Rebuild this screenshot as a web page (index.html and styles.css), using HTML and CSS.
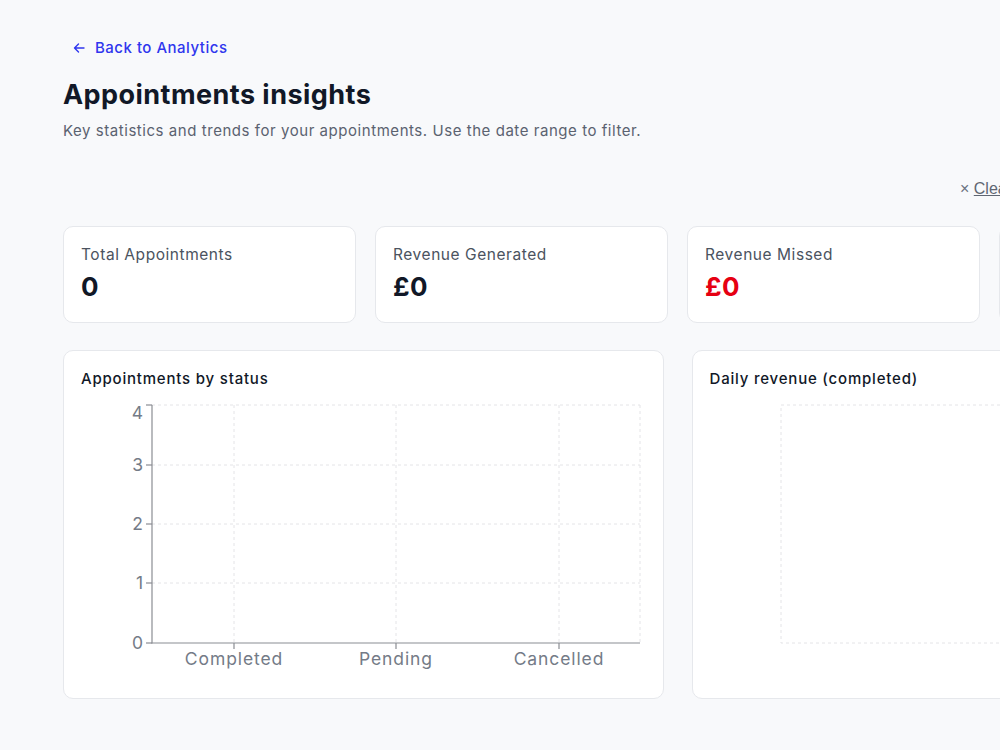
FILE: index.html
```html
<!DOCTYPE html>
<html lang="en">
<head>
    <meta charset="UTF-8">
    <meta name="viewport" content="width=device-width, initial-scale=1.0">
    <title>Appointments insights</title>

    <link rel="stylesheet" href="styles.css">
</head>
<body>
    <div class="page">
        <a class="back-link" href="#">
            <svg width="12" height="12" viewBox="0 0 12 12" fill="none" stroke="currentColor" stroke-width="1.4" stroke-linecap="round" stroke-linejoin="round">
                <path d="M11 6H1.5M5.5 2L1.5 6l4 4"/>
            </svg>
            <span>Back to Analytics</span>
        </a>

        <h1>Appointments insights</h1>
        <p class="tagline">Key statistics and trends for your appointments. Use the date range to filter.</p>

        <div class="toolbar">
            <a class="clear-link" href="#"><span class="times">&times;</span> <u>Clear</u></a>
            <div class="date-range">
                <span>From</span>
                <span>To</span>
            </div>
        </div>

        <section class="stats">
            <div class="stat-card">
                <p class="stat-label">Total Appointments</p>
                <p class="stat-value">0</p>
            </div>
            <div class="stat-card">
                <p class="stat-label">Revenue Generated</p>
                <p class="stat-value">&pound;0</p>
            </div>
            <div class="stat-card">
                <p class="stat-label">Revenue Missed</p>
                <p class="stat-value missed">&pound;0</p>
            </div>
            <div class="stat-card">
                <p class="stat-label">Average Value</p>
                <p class="stat-value">&pound;0</p>
            </div>
        </section>

        <section class="charts">
            <div class="chart-card">
                <h2>Appointments by status</h2>
                <svg class="chart" width="564" height="294" viewBox="0 0 564 294">
                    <!-- grid -->
                    <g class="grid">
                        <line x1="71" y1="16" x2="559" y2="16"/>
                        <line x1="71" y1="76" x2="559" y2="76"/>
                        <line x1="71" y1="135" x2="559" y2="135"/>
                        <line x1="71" y1="194" x2="559" y2="194"/>
                        <line x1="153" y1="16" x2="153" y2="254"/>
                        <line x1="315" y1="16" x2="315" y2="254"/>
                        <line x1="478" y1="16" x2="478" y2="254"/>
                        <line x1="559" y1="16" x2="559" y2="254"/>
                    </g>
                    <!-- axes -->
                    <g class="axis">
                        <line x1="71" y1="16" x2="71" y2="254.5"/>
                        <line x1="70.5" y1="254" x2="559" y2="254"/>
                        <line x1="65" y1="16" x2="71" y2="16"/>
                        <line x1="65" y1="76" x2="71" y2="76"/>
                        <line x1="65" y1="135" x2="71" y2="135"/>
                        <line x1="65" y1="194" x2="71" y2="194"/>
                        <line x1="65" y1="254" x2="71" y2="254"/>
                        <line x1="153" y1="254" x2="153" y2="260"/>
                        <line x1="315" y1="254" x2="315" y2="260"/>
                        <line x1="478" y1="254" x2="478" y2="260"/>
                    </g>
                    <g class="tick-text y-ticks">
                        <text x="62" y="30">4</text>
                        <text x="62" y="82">3</text>
                        <text x="62" y="141">2</text>
                        <text x="62" y="200">1</text>
                        <text x="62" y="260">0</text>
                    </g>
                    <g class="tick-text x-ticks">
                        <text x="153" y="276">Completed</text>
                        <text x="315" y="276">Pending</text>
                        <text x="478" y="276">Cancelled</text>
                    </g>
                </svg>
            </div>
            <div class="chart-card">
                <h2>Daily revenue (completed)</h2>
                <svg class="chart" width="564" height="294" viewBox="0 0 564 294">
                    <rect class="grid" x="71" y="16" width="488" height="238" fill="none"/>
                </svg>
            </div>
        </section>
    </div>
</body>
</html>
```

FILE: styles.css
```css
/* VARIABLES */

:root {
    --page-bg: #f8f9fb;
    --border: #e6e8ec;
    --text-dark: #111827;
    --text-muted: #5b6270;
    --link-blue: #2f36ee;
    --missed-red: #e60012;
}

/* TYPOGRAPHY and TEXT */

html {
    font-family: Inter, "Noto Sans", sans-serif;
}

body {
    margin: 0;
    background-color: var(--page-bg);
    color: var(--text-dark);
    overflow: hidden;
}

h1 {
    font-size: 27px;
    line-height: 36px;
    font-weight: 700;
    letter-spacing: 0.45px;
    margin: 19px 0 0;
}

.tagline {
    font-size: 15px;
    line-height: 22px;
    letter-spacing: 0.55px;
    color: var(--text-muted);
    margin: 7px 0 0;
}

/* LAYOUT */

.page {
    width: 1229px;
    padding: 38px 0 40px 63px;
}

/* BACK LINK */

.back-link {
    display: inline-flex;
    align-items: center;
    gap: 10px;
    padding-left: 10px;
    font-size: 15px;
    line-height: 20px;
    font-weight: 500;
    letter-spacing: 0.5px;
    color: var(--link-blue);
    text-decoration: none;
}

/* TOOLBAR */

.toolbar {
    display: flex;
    justify-content: flex-end;
    align-items: center;
    gap: 16px;
    margin-top: 36px;
    height: 22px;
}

.clear-link {
    font-family: "Liberation Sans", Arial, sans-serif;
    font-size: 16px;
    color: #5f6672;
    text-decoration: none;
    white-space: nowrap;
}

.clear-link .times {
    color: #6b7280;
}

.date-range {
    display: flex;
    gap: 8px;
    width: 264px;
    font-size: 14px;
    color: var(--text-muted);
}

/* STAT CARDS */

.stats {
    display: grid;
    grid-template-columns: repeat(4, 1fr);
    gap: 19px;
    margin-top: 26px;
}

.stat-card {
    background-color: #fff;
    border: 1px solid var(--border);
    border-radius: 10px;
    padding: 17px 17px 19px;
}

.stat-label {
    margin: 0;
    font-size: 15.5px;
    line-height: 21px;
    letter-spacing: 0.55px;
    color: #4b5360;
}

.stat-value {
    margin: 6px 0 0;
    font-size: 26px;
    line-height: 32px;
    font-weight: 700;
    letter-spacing: 0.4px;
    color: var(--text-dark);
}

.stat-value.missed {
    color: var(--missed-red);
}

/* CHARTS */

.charts {
    display: grid;
    grid-template-columns: 1fr 1fr;
    gap: 28px;
    margin-top: 27px;
}

.chart-card {
    background-color: #fff;
    border: 1px solid var(--border);
    border-radius: 10px;
    padding: 18px 17px 12px;
    height: 349px;
    box-sizing: border-box;
}

.chart-card h2 {
    margin: 0;
    font-size: 15px;
    line-height: 20px;
    font-weight: 500;
    letter-spacing: 0.8px;
    color: var(--text-dark);
}

.chart {
    display: block;
}

.chart .grid line,
.chart rect.grid {
    stroke: #e4e4e7;
    stroke-dasharray: 3 3;
}

.chart .axis line {
    stroke: #8a8d93;
    stroke-width: 1.2;
}

.tick-text text {
    font-size: 17.5px;
    fill: #747b87;
}

.y-ticks text {
    text-anchor: end;
}

.x-ticks text {
    text-anchor: middle;
    letter-spacing: 0.9px;
}
```
